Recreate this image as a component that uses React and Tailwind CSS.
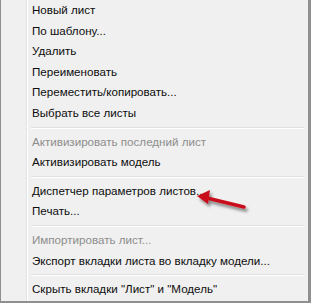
const items = [
	{ label: 'Новый лист' },
	{ label: 'По шаблону...' },
	{ label: 'Удалить' },
	{ label: 'Переименовать' },
	{ label: 'Переместить/копировать...' },
	{ label: 'Выбрать все листы' },
	{ sep: true },
	{ label: 'Активизировать последний лист', disabled: true },
	{ label: 'Активизировать модель' },
	{ sep: true },
	{ label: 'Диспетчер параметров листов...' },
	{ label: 'Печать...' },
	{ sep: true },
	{ label: 'Импортировать лист...', disabled: true },
	{ label: 'Экспорт вкладки листа во вкладку модели...' },
	{ sep: true },
	{ label: 'Скрыть вкладки "Лист" и "Модель"' },
]

const Arrow = () => (
	<svg className="absolute left-[190px] top-[188px]" width="60" height="30" viewBox="0 0 60 30">
		<defs>
			<filter id="sh" x="-30%" y="-50%" width="160%" height="200%">
				<feDropShadow dx="2" dy="3" stdDeviation="1.6" floodColor="#000" floodOpacity="0.45" />
			</filter>
		</defs>
		<g filter="url(#sh)">
			<line x1="53" y1="19" x2="16" y2="10" stroke="#c8101a" strokeWidth="3.5" strokeLinecap="round" />
			<polygon points="6,8 19,2 17,16" fill="#c8101a" />
		</g>
	</svg>
)

export default function App() {
	return (
		<div className="w-[311px] h-[303px] bg-[#8f8f8f] pl-px pr-[3px] pb-[2px]" style={{ fontFamily: '"Liberation Sans", Arial, sans-serif' }}>
			<div className="relative h-full bg-[#f0f0f0] flex">
				<div className="w-[26px] shrink-0 border-r border-[#e2e3e3]" />
				<div className="w-px bg-white" />
				<div className="flex-1 pt-0 pr-[4px]">
					{items.map((it, i) =>
						it.sep ? (
							<div key={i} className="ml-[3px] my-[3px] h-[2px] border-t border-[#e0e0e0] border-b border-b-white" />
						) : (
							<div
								key={i}
								className={
									'h-[20.6px] leading-[20.6px] pl-[4px] text-[11.6px] whitespace-nowrap ' +
									(it.disabled ? 'text-[#8d8d8d]' : 'text-[#0d0d0d]')
								}
							>
								{it.label}
							</div>
						)
					)}
				</div>
				<Arrow />
			</div>
		</div>
	)
}
